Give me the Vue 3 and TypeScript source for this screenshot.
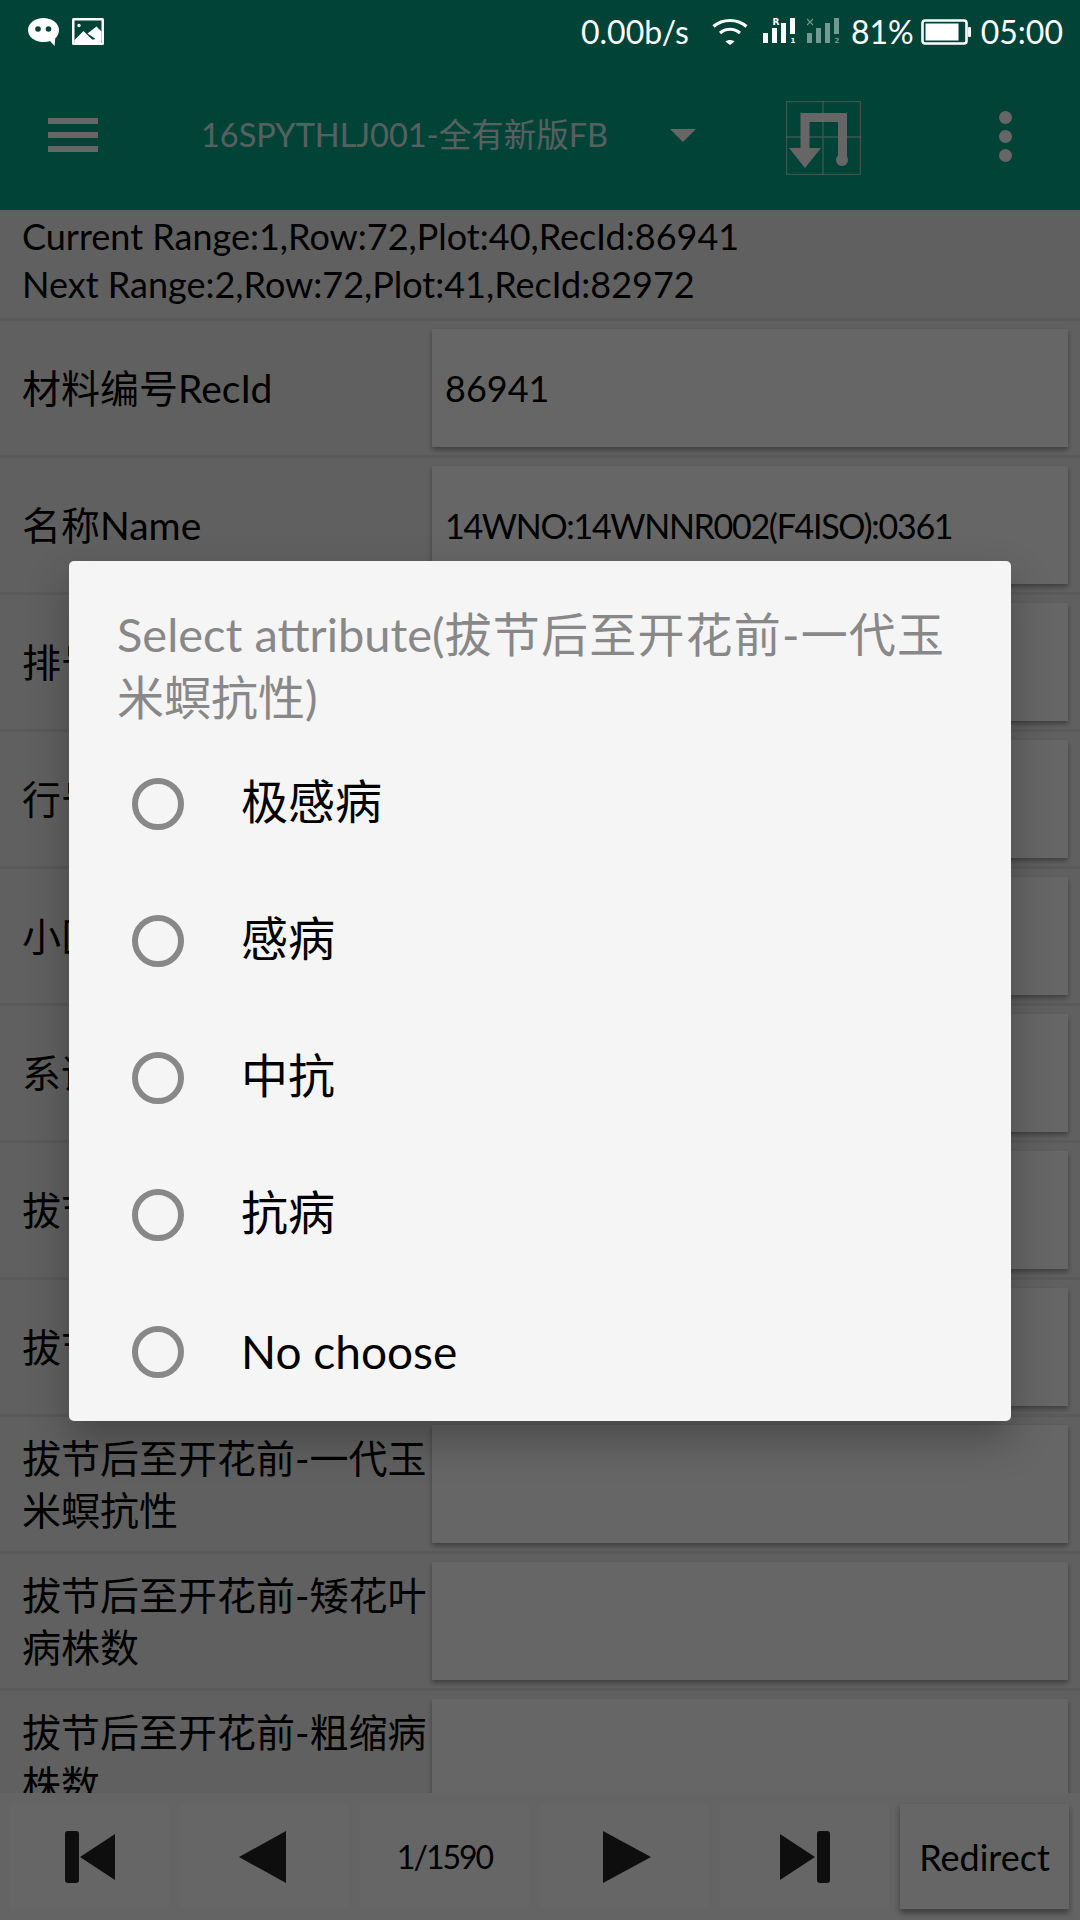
<script setup lang="ts">
  import {ref} from 'vue';

  const rows = ref([
    {id: 1, label: '材料编号RecId', value: '86941'},
    {id: 2, label: '名称Name', value: '14WNO:14WNNR002(F4ISO):0361'},
    {id: 3, label: '排号Range', value: ''},
    {id: 4, label: '行号Row', value: ''},
    {id: 5, label: '小区号Plot', value: ''},
    {id: 6, label: '系谱Pedigree', value: ''},
    {id: 7, label: '拔节后至开花前-株高', value: ''},
    {id: 8, label: '拔节后至开花前-穗位高', value: ''},
    {id: 9, label: '拔节后至开花前-一代玉米螟抗性', value: ''},
    {id: 10, label: '拔节后至开花前-矮花叶病株数', value: ''},
    {id: 11, label: '拔节后至开花前-粗缩病株数', value: ''}
  ]);

  const options = ref(['极感病', '感病', '中抗', '抗病', 'No choose']);

  function isLatin(text: string) {
    return /^[\x20-\x7e]+$/.test(text);
  }
</script>

<template>
  <div class="screen">
    <div class="status-bar">
      <svg class="ic-wechat" width="31" height="28" viewBox="0 0 31 28">
        <path d="M15.500 0C7 0 0 5.300 0 12c0 6.400 6 11.400 13.600 11.900 2.800.2 6.200-.2 8.400-1l4.600 5 .6-7.300C29.400 18.600 31 15.500 31 12 31 5.300 24 0 15.500 0z" fill="#fff"/>
        <circle cx="10" cy="11" r="2.800" fill="#024338"/>
        <circle cx="20.500" cy="11" r="2.800" fill="#024338"/>
      </svg>
      <svg class="ic-image" width="32" height="27" viewBox="0 0 32 27">
        <rect width="32" height="27" rx="1.500" fill="#fff"/>
        <rect x="2.500" y="2.500" width="27" height="22" fill="#024338"/>
        <circle cx="7" cy="7.500" r="1.700" fill="#fff"/>
        <path d="M2.500 22l9-9 6.500 6.500 3 2.500-5.500-.5h13.500v3.500H2.500z" fill="#fff"/>
        <path d="M15.500 15.500L24.500 8.500l5 5V23H22l1-2.500z" fill="#fff"/>
      </svg>
      <div class="status-right">
        <span class="speed">0.00b/s</span>
        <svg class="ic-wifi" width="36" height="27" viewBox="0 0 36 27">
          <path d="M1.500 8.500C10.500 .5 25.500 .5 34.500 8.500" fill="none" stroke="#fff" stroke-width="3.200"/>
          <path d="M8 15c6-5 14-5 20 0" fill="none" stroke="#fff" stroke-width="3.200"/>
          <path d="M13.500 23.500L18 27l4.500-3.500c-2.500-2-6.500-2-9 0z" fill="#fff"/>
        </svg>
        <svg class="ic-signal" width="33" height="27" viewBox="0 0 33 27">
          <rect x="0" y="15" width="5" height="10" fill="#fff"/>
          <rect x="9" y="10" width="5" height="15" fill="#fff"/>
          <rect x="18" y="5" width="5" height="20" fill="#fff"/>
          <rect x="27" y="0" width="5" height="16" fill="#fff"/>
          <text x="9.500" y="7" class="tiny">R</text>
          <text x="27.500" y="25" class="tinier">1</text>
        </svg>
        <svg class="ic-signal dim" width="33" height="27" viewBox="0 0 33 27">
          <rect x="0" y="15" width="5" height="10" fill="#fff"/>
          <rect x="9" y="10" width="5" height="15" fill="#fff"/>
          <rect x="18" y="5" width="5" height="20" fill="#fff"/>
          <rect x="27" y="0" width="5" height="16" fill="#fff"/>
          <path d="M0 1l6 6m0-6L0 7" fill="none" stroke="#fff" stroke-width="1.100"/>
          <text x="27.500" y="25" class="tinier">2</text>
        </svg>
        <span class="pct">81%</span>
        <svg class="ic-battery" width="50" height="26" viewBox="0 0 50 26">
          <rect x="1.500" y="1.500" width="44" height="23" rx="2.500" fill="none" stroke="#fff" stroke-width="2.600"/>
          <rect x="4.500" y="4.500" width="33" height="17" fill="#fff"/>
          <rect x="47" y="8" width="3" height="10" rx="1" fill="#fff"/>
        </svg>
        <span class="clock">05:00</span>
      </div>
    </div>

    <div class="app-bar">
      <div class="menu"><i></i><i></i><i></i></div>
      <span class="app-title">16SPYTHLJ001-全有新版FB</span>
      <span class="spinner-arrow"></span>
      <svg class="ic-route" width="75" height="74" viewBox="0 0 75 74">
        <rect x=".5" y=".5" width="74" height="73" fill="none" stroke="#fff" stroke-opacity=".55" stroke-width="1.400"/>
        <path d="M37 0v74M0 36h75" stroke="#fff" stroke-opacity=".55" stroke-width="1.400"/>
        <path d="M19 48V16.500h37.500V58" fill="none" stroke="#fff" stroke-width="9"/>
        <circle cx="56" cy="59" r="6" fill="#fff"/>
        <path d="M3 47h32L19 67z" fill="#fff"/>
      </svg>
      <div class="more"><i></i><i></i><i></i></div>
    </div>

    <div class="info">
      <div>Current Range:1,Row:72,Plot:40,RecId:86941</div>
      <div>Next Range:2,Row:72,Plot:41,RecId:82972</div>
    </div>

    <div class="form">
      <div v-for="row in rows" :key="row.id" class="row">
        <div class="label">{{ row.label }}</div>
        <div class="field" :class="{ tight: row.value.length > 10 }">{{ row.value }}</div>
      </div>
    </div>

    <div class="pager">
      <div class="btn first">
        <svg width="50" height="52" viewBox="0 0 50 52">
          <rect x="0" y="0" width="14" height="52" rx="3" fill="#242424"/>
          <path d="M50 3v46L15 26z" fill="#242424"/>
        </svg>
      </div>
      <div class="btn prev">
        <svg width="47" height="52" viewBox="0 0 47 52"><path d="M47 0v52L0 26z" fill="#242424"/></svg>
      </div>
      <div class="btn page">1/1590</div>
      <div class="btn next">
        <svg width="48" height="52" viewBox="0 0 48 52"><path d="M0 0v52l48-26z" fill="#242424"/></svg>
      </div>
      <div class="btn">
        <svg width="50" height="52" viewBox="0 0 50 52">
          <path d="M0 3v46l35-23z" fill="#242424"/>
          <rect x="37" y="0" width="13" height="52" rx="3" fill="#242424"/>
        </svg>
      </div>
      <div class="btn redirect">Redirect</div>
    </div>

    <div class="scrim">
      <div class="dialog">
        <div class="dialog-title">Select attribute(<span class="wide">拔节后至开花前-一代玉</span>米螟抗性)</div>
        <div v-for="opt in options" :key="opt" class="option">
          <span class="radio"></span>
          <span class="opt-text" :class="{ cjk: !isLatin(opt) }">{{ opt }}</span>
        </div>
      </div>
    </div>
  </div>
</template>

<style scoped>
  .screen {
    position: relative;
    width: 1080px;
    height: 1920px;
    display: flex;
    flex-direction: column;
    overflow: hidden;
    background: #f0f0f0;
    color: #000;
    font-family: Lato, "Noto Sans CJK SC", sans-serif;
  }

  .status-bar {
    position: relative;
    z-index: 3;
    height: 72px;
    flex: none;
    display: flex;
    align-items: flex-start;
    padding: 18px 17px 0 28px;
    box-sizing: border-box;
    background: #024338;
    color: #fff;
  }

  .ic-image {
    margin-left: 13px;
  }

  .status-right {
    margin-left: auto;
    display: flex;
    align-items: center;
    height: 29px;
    margin-top: -1px;
    font-size: 32px;
    line-height: 29px;
  }

  .speed {
    margin-right: 23px;
  }

  .ic-signal {
    margin-left: 15px;
  }

  .ic-signal.dim {
    margin-left: 11px;
    opacity: .45;
  }

  .tiny {
    font-family: "DejaVu Sans", sans-serif;
    font-size: 9px;
    font-weight: 700;
    fill: #fff;
  }

  .tinier {
    font-family: "DejaVu Sans", sans-serif;
    font-size: 7px;
    font-weight: 700;
    fill: #fff;
  }

  .pct {
    margin-left: 11px;
  }

  .ic-battery {
    margin-left: 7px;
  }

  .clock {
    margin-left: 10px;
  }

  .app-bar {
    height: 138px;
    flex: none;
    box-sizing: border-box;
    padding-bottom: 12px;
    display: flex;
    align-items: center;
    background: #05a88c;
    color: rgba(255, 255, 255, .87);
  }

  .menu {
    margin-left: 48px;
    width: 50px;
    display: flex;
    flex-direction: column;
    gap: 8px;
  }

  .menu i {
    display: block;
    height: 6px;
    background: #fff;
  }

  .app-title {
    margin: 0 0 6px 103px;
    width: 469px;
    font-size: 32.500px;
  }

  .spinner-arrow {
    width: 0;
    height: 0;
    border-left: 13px solid transparent;
    border-right: 13px solid transparent;
    border-top: 13px solid #fff;
  }

  .ic-route {
    margin: 6px 0 0 90px;
  }

  .more {
    margin: 2px 0 0 138px;
    display: flex;
    flex-direction: column;
    gap: 6px;
  }

  .more i {
    display: block;
    width: 13px;
    height: 13px;
    border-radius: 50%;
    background: #fff;
  }

  .info {
    flex: none;
    height: 111px;
    padding: 2px 0 0 22px;
    box-sizing: border-box;
    font-size: 36px;
    line-height: 48px;
    border-bottom: 3px solid #e0e0e0;
  }

  .form {
    flex: 1;
    min-height: 0;
    overflow: hidden;
  }

  .row {
    height: 134px;
    display: flex;
    align-items: center;
    border-bottom: 3px solid #e0e0e0;
  }

  .label {
    width: 432px;
    flex: none;
    box-sizing: border-box;
    padding: 0 0 0 22px;
    font-size: 39px;
    line-height: 52px;
  }

  .field {
    width: 636px;
    height: 118px;
    box-sizing: border-box;
    padding-left: 13px;
    display: flex;
    align-items: center;
    background: #fff;
    font-size: 36px;
    box-shadow: 0 3px 5px rgba(0, 0, 0, .35);
  }

  .field.tight {
    font-size: 34px;
    letter-spacing: -1.300px;
  }

  .pager {
    flex: none;
    height: 127px;
    box-sizing: border-box;
    padding: 11px 0 11px 10px;
    display: flex;
    gap: 11px;
    background: #fafafa;
  }

  .btn {
    width: 169px;
    flex: none;
    display: flex;
    align-items: center;
    justify-content: center;
    background: #fff;
    font-size: 36px;
  }

  .first {
    width: 159px;
  }

  .prev {
    padding-right: 5px;
    box-sizing: border-box;
  }

  .next {
    padding-left: 5px;
    box-sizing: border-box;
  }

  .page {
    font-size: 32px;
    letter-spacing: -2px;
  }

  .redirect {
    box-shadow: 0 4px 6px rgba(0, 0, 0, .4);
  }

  .scrim {
    position: absolute;
    inset: 0;
    z-index: 2;
    background: rgba(0, 0, 0, .6);
  }

  .dialog {
    position: absolute;
    left: 69px;
    top: 561px;
    width: 942px;
    height: 860px;
    border-radius: 5px;
    background: #f5f5f5;
    box-shadow: 0 18px 40px rgba(0, 0, 0, .28);
  }

  .dialog-title {
    height: 174px;
    box-sizing: border-box;
    padding: 42px 46px 0 48px;
    color: #888;
    font-size: 47px;
    line-height: 63px;
  }

  .wide {
    letter-spacing: 1.200px;
  }

  .option {
    height: 137px;
    display: flex;
    align-items: center;
    padding-left: 63px;
  }

  .radio {
    width: 52px;
    height: 52px;
    box-sizing: border-box;
    border: 6px solid #888;
    border-radius: 50%;
  }

  .opt-text {
    margin-left: 57px;
    font-size: 46px;
  }

  .opt-text.cjk {
    margin-bottom: 10px;
    font-size: 47px;
  }
</style>
